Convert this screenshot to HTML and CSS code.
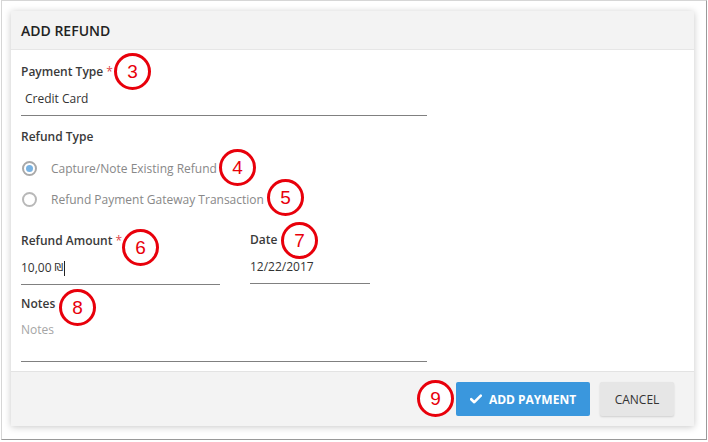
FILE: index.html
```html
<!DOCTYPE html>
<html>
<head>
<meta charset="utf-8">
<link rel="stylesheet" href="styles.css">
</head>
<body>
<div class="frame">
  <div class="card">
    <div class="card-header">ADD REFUND</div>
    <div class="card-body">
      <div class="field">
        <div class="label">Payment Type <span class="req">*</span></div>
        <div class="input wide select-value">Credit Card</div>
      </div>
      <div class="field refund-type">
        <div class="label">Refund Type</div>
        <div class="radios">
          <div class="radio-row"><span class="radio checked"></span><span class="radio-text">Capture/Note Existing Refund</span></div>
          <div class="radio-row"><span class="radio"></span><span class="radio-text">Refund Payment Gateway Transaction</span></div>
        </div>
      </div>
      <div class="row">
        <div class="field amount">
          <div class="label">Refund Amount <span class="req">*</span></div>
          <div class="input amount-input">10,00 <span class="shekel">₪</span><span class="caret"></span></div>
        </div>
        <div class="field date">
          <div class="label">Date</div>
          <div class="input date-input">12/22/2017</div>
        </div>
      </div>
      <div class="field notes">
        <div class="label">Notes</div>
        <div class="input wide textarea placeholder">Notes</div>
      </div>
    </div>
    <div class="card-footer">
      <button class="btn btn-primary"><svg width="12" height="10" viewBox="0 0 12 10"><path d="M1.2 5.2 L4.3 8.2 L10.8 1.6" fill="none" stroke="#fff" stroke-width="2.6" stroke-linecap="round" stroke-linejoin="round"/></svg>ADD PAYMENT</button>
      <button class="btn btn-default">CANCEL</button>
    </div>
  </div>
</div>
<div class="mark m3">3</div>
<div class="mark m4">4</div>
<div class="mark m5">5</div>
<div class="mark m6">6</div>
<div class="mark m7">7</div>
<div class="mark m8">8</div>
<div class="mark m9">9</div>
</body>
</html>
```
FILE: styles.css
```css
* { box-sizing: border-box; }
html, body { margin: 0; padding: 0; background: #fff; }
body {
  font-family: "Open Sans", "Liberation Sans", sans-serif;
  font-size: 12px;
  color: #333;
  width: 708px;
  height: 442px;
  overflow: hidden;
}
.frame {
  margin-left: 1px;
  width: 706px;
  height: 440px;
  border: 1px solid #d6d6d6;
  border-right-color: #9a9a9a;
  border-bottom-color: #9a9a9a;
  padding: 10px 0 0 9px;
  background: #fff;
}
.card {
  width: 683px;
  height: 415px;
  background: #fff;
  box-shadow: 0 1px 7px rgba(0,0,0,0.22);
  display: flex;
  flex-direction: column;
}
.card-header {
  height: 39px;
  background: #f3f3f3;
  border-bottom: 1px solid #e6e6e6;
  padding: 1px 10px 0 10px;
  display: flex;
  align-items: center;
  font-weight: 600;
  font-size: 14px;
  color: #222;
}
.card-body {
  flex: 1;
  padding: 14px 10px 0 10px;
}
.label {
  font-weight: 600;
  line-height: 16px;
  color: #3a3a3a;
}
.req { color: #e0464b; font-weight: 400; }
.input {
  height: 33px;
  border-bottom: 1px solid #808080;
  display: flex;
  align-items: center;
  line-height: 16px;
  margin-top: 3px;
}
.wide { width: 406px; }
.select-value { padding-left: 4px; }
.refund-type { margin-top: 13px; }
.radios { margin-top: 8px; }
.radio-row {
  height: 31px;
  display: flex;
  align-items: center;
  padding-left: 1px;
}
.radio {
  width: 15px;
  height: 15px;
  border: 2px solid #b8b8b8;
  border-radius: 50%;
  display: flex;
  align-items: center;
  justify-content: center;
  margin-right: 14px;
}
.radio.checked { border-color: #a9a9a9; }
.radio.checked::after {
  content: "";
  width: 7px;
  height: 7px;
  border-radius: 50%;
  background: #78b2e2;
}
.radio-text { color: #888; }
.row {
  display: flex;
  gap: 30px;
  margin-top: 18px;
}
.amount-input { width: 199px; }
.date-input { width: 120px; }
.date .label { margin-top: -1px; }
.shekel { font-family: "DejaVu Sans", sans-serif; font-size: 11px; margin-left: 3px; }
.caret {
  display: inline-block;
  width: 1px;
  height: 15px;
  background: #222;
  margin-left: 1px;
}
.notes { margin-top: 11px; }
.textarea {
  height: 48px;
  align-items: flex-start;
  padding-top: 8px;
  margin-top: 2px;
}
.placeholder { color: #a5a5a5; }
.card-footer {
  height: 55px;
  background: #f3f3f3;
  border-top: 1px solid #e3e3e3;
  display: flex;
  align-items: center;
  justify-content: flex-end;
  gap: 10px;
  padding: 0 20px 0 0;
}
.btn {
  font-family: "Open Sans", "Liberation Sans", sans-serif;
  font-size: 12px;
  height: 34px;
  border: none;
  border-radius: 2px;
  display: flex;
  align-items: center;
  justify-content: center;
  cursor: pointer;
}
.btn-primary {
  width: 134px;
  background: #3a97dd;
  color: #fff;
  font-weight: 700;
  gap: 7px;
}
.btn-default {
  width: 74px;
  background: #e6e6e6;
  color: #333;
  box-shadow: 0 1px 2px rgba(0,0,0,0.15);
}
.mark {
  position: absolute;
  width: 37px;
  height: 37px;
  border: 3px solid #e8000b;
  border-radius: 50%;
  background: #fff;
  color: #e8000b;
  font-family: "Liberation Sans", Arial, sans-serif;
  font-size: 19px;
  display: flex;
  align-items: center;
  justify-content: center;
}
.m3 { left: 114px; top: 53px; }
.m4 { left: 219px; top: 149px; }
.m5 { left: 267px; top: 179px; }
.m6 { left: 122px; top: 229px; }
.m7 { left: 281px; top: 222px; }
.m8 { left: 59px; top: 289px; }
.m9 { left: 417px; top: 380px; }
```
